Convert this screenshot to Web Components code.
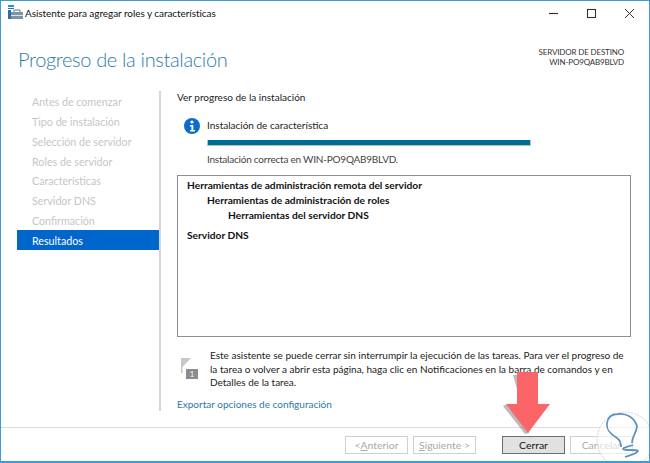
<!DOCTYPE html>
<html lang="es"><head><meta charset="utf-8"><title>Asistente</title>
<style>html,body{margin:0;padding:0;background:#fff}body{font-family:Lato,"Open Sans",sans-serif;}</style></head>
<body>
<wizard-window>
  <title-bar slot="title">Asistente para agregar roles y características</title-bar>
  <wizard-header slot="header"></wizard-header>
  <wizard-nav slot="nav"></wizard-nav>
  <wizard-content slot="content"></wizard-content>
  <wizard-footer slot="footer"></wizard-footer>
</wizard-window>
<script>
function el(name, html){
  customElements.define(name, class extends HTMLElement{
    constructor(){super();this.attachShadow({mode:'open'}).innerHTML=html;}
  });
}
el('wizard-window',`<style>
:host{display:flex;flex-direction:column;position:relative;box-sizing:border-box;width:650px;height:463px;overflow:hidden;background:#fff;border:solid #3f9bd8;border-width:1px 1px 2px 1px;color:#222;font:10px Lato,"Open Sans",sans-serif}
.main{display:flex;height:320px}
.rule{height:1px;background:#dcdcdc;margin-top:16px}
.arrow{position:absolute;left:499px;top:369px}
.logo{position:absolute;left:589px;top:401px}
</style>
<slot name="title"></slot><slot name="header"></slot>
<div class="main"><slot name="nav"></slot><slot name="content"></slot></div>
<div class="rule"></div>
<slot name="footer"></slot>
<svg class="arrow" width="52" height="66" viewBox="0 0 52 66"><path d="M13 5H18V34H7L3 36 25 64l4-1z" fill="#555" opacity=".4"/><path d="M17 2H38V34H50L28 63 6 34H17z" fill="#fb6567"/></svg>
<svg class="logo" width="60" height="60" viewBox="0 0 60 60"><circle cx="35" cy="38" r="28" fill="#fff" fill-opacity=".6" stroke="#dedede" stroke-width="1.2" stroke-dasharray="2 1"/><path d="M27 36C20 32 16 28 17 21 18 14 22 12 28 12 36 11 44 15 47 24 47 30 42 34 42 41M27 36C30 38 31 41 31 45" fill="none" stroke="#5f93bb" stroke-width="1.8"/><path d="M43 43C38 45 33 45 33 47 35 49 47 47 48 49 47 52 40 53 35 55" fill="none" stroke="#5f93bb" stroke-width="1.8"/></svg>`);
el('title-bar',`<style>
:host{display:flex;align-items:center;height:26px;flex:none;padding:0 0 2px 6px;box-sizing:border-box;font-size:10px;letter-spacing:-.06px;color:#111}
svg.i{margin-right:2px;flex:none}
.t{flex:1;white-space:nowrap}
.w{display:flex;gap:21px;padding-right:11px;align-items:center}
</style>
<svg class="i" width="16" height="16" viewBox="0 0 16 16"><path d="M1 0h6v2H1z" fill="#2f8fd6"/><path d="M1 3h6v1H1zM1 5h3v9H1z" fill="#2a6fa8"/><path d="M4 7h12v7H4z" fill="#7d93a6"/><path d="M7 7V5h6v2" fill="none" stroke="#60788c"/><path d="M4 10h12v1H4z" fill="#dce6ee"/></svg>
<span class="t"><slot></slot></span>
<span class="w">
<svg width="17" height="17" viewBox="0 0 17 17"><path d="M4 8.5h9" stroke="#333" stroke-width="1.2"/></svg>
<svg width="17" height="17" viewBox="0 0 17 17"><rect x="4.5" y="4.5" width="8" height="8" fill="none" stroke="#333" stroke-width="1.1"/></svg>
<svg width="17" height="17" viewBox="0 0 17 17"><path d="M4 4l9 9M13 4l-9 9" stroke="#333" stroke-width="1"/></svg>
</span>`);
el('wizard-header',`<style>
:host{display:flex;justify-content:space-between;height:64px;flex:none;padding:16px 25px 0 17px;box-sizing:border-box}
h1{margin:0;font:300 20px/32px Lato,"Open Sans",sans-serif;letter-spacing:-.34px;color:#2f7ba8;white-space:nowrap}
.s{font-size:8px;letter-spacing:-.15px;line-height:10px;text-align:right;color:#333;margin-top:4px}
</style><h1>Progreso de la instalación</h1><div class="s">SERVIDOR DE DESTINO<br>WIN-PO9QAB9BLVD</div>`);
el('wizard-nav',`<style>
:host{display:flex;flex-direction:column;box-sizing:border-box;width:142px;height:320px;flex:none;margin-left:16px;font-size:10.7px;color:#c6c6c6}
div{height:19.86px;line-height:22px;padding-left:15px;white-space:nowrap}
.on{background:#0066cc;color:#fff}
</style><div>Antes de comenzar</div><div>Tipo de instalación</div><div>Selección de servidor</div><div>Roles de servidor</div><div>Características</div><div>Servidor DNS</div><div>Confirmación</div><div class="on">Resultados</div>`);
el('wizard-content',`<style>
:host{display:flex;flex-direction:column;box-sizing:border-box;width:480px;height:320px;flex:none;border-left:2px solid #d6d6d6;padding:0 0 0 16px;font-size:10px;color:#222}
.v{line-height:12px}
.st{display:flex;margin-top:15px;height:57px}
.ic{margin:0 7px 0 7px;flex:none}
.b{flex:1}
.bt{line-height:15px}
.bar{box-sizing:border-box;height:6px;background:#006b96;margin-top:7px;width:324px;border:solid #a9c4cf;border-width:0 1px 1px 1px}
.ok{margin-top:5.5px;line-height:14px;color:#444;letter-spacing:-.22px}
.box{box-sizing:border-box;height:162px;width:454px;border:1px solid #8f8f8f;padding:2px 9px;font-weight:700;font-size:10.2px;line-height:15px;color:#111}
.box div{height:15px;white-space:nowrap}
.n{display:flex;margin-top:12px;height:41px;line-height:13.5px;color:#222;white-space:nowrap}
.fl{margin:9px 10px 0 4px;flex:none}
.x{color:#2a7aa8;margin-top:7px;line-height:14px}
</style>
<div class="v">Ver progreso de la instalación</div>
<div class="st">
<svg class="ic" width="16" height="16" viewBox="0 0 16 16"><circle cx="8" cy="8" r="8" fill="#0a6ccb"/><circle cx="8" cy="4" r="1.6" fill="#fff"/><path d="M6 7h3.3v5H11v1.4H6V12h1.4V8.4H6z" fill="#fff"/></svg>
<div class="b"><div class="bt">Instalación de característica</div><div class="bar"></div><div class="ok">Instalación correcta en WIN-PO9QAB9BLVD.</div></div>
</div>
<div class="box"><div>Herramientas de administración remota del servidor</div><div style="padding-left:20px">Herramientas de administración de roles</div><div style="padding-left:41px">Herramientas del servidor DNS</div><div style="margin-top:5px">Servidor DNS</div></div>
<div class="n">
<svg class="fl" width="19" height="21" viewBox="0 0 19 21"><path d="M0 0h1.5v15H0z" fill="#c4c4c4"/><path d="M0 0h10L1.5 9H0z" fill="#c8c8c8"/><rect x="5" y="11" width="12" height="10" fill="#8c8c8c"/><text x="11" y="19" font-size="7.5" font-family="Lato" fill="#fff" text-anchor="middle">1</text></svg>
<div>Este asistente se puede cerrar sin interrumpir la ejecución de las tareas. Para ver el progreso de<br>la tarea o volver a abrir esta página, haga clic en Notificaciones en la barra de comandos y en<br>Detalles de la tarea.</div></div>
<div class="x">Exportar opciones de configuración</div>`);
el('wizard-footer',`<style>
:host{display:flex;align-items:center;padding:8px 0 0 344px;font-size:10.4px}
wizard-button{margin-right:5px}
.g{margin-left:21px}
</style><wizard-button disabled>&lt; <u>A</u>nterior</wizard-button><wizard-button disabled><u>S</u>iguiente &gt;</wizard-button><wizard-button class="g" active>Cerrar</wizard-button><wizard-button disabled>Cancelar</wizard-button>`);
el('wizard-button',`<style>
:host{box-sizing:border-box;display:flex;align-items:center;justify-content:center;width:63px;height:18px;border:1px solid #adadad;background:#fff;color:#a8a8a8;white-space:nowrap}
:host([active]){background:#e1e1e1;border:1px solid #6d6d6d;color:#111}
:host([disabled]){border-color:#cfcfcf}
</style><slot></slot>`);
</script>
</body></html>
